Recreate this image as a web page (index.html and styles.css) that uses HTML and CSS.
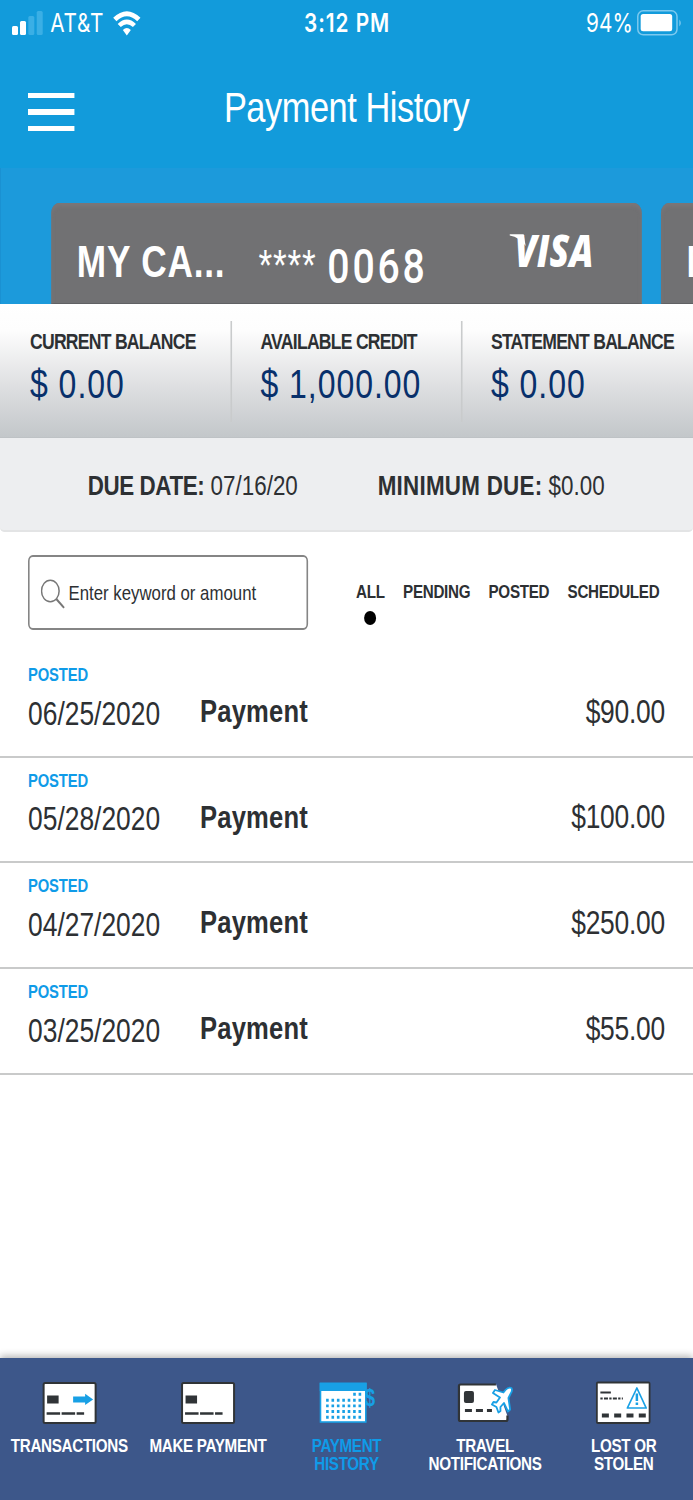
FILE: index.html
```html
<!DOCTYPE html>
<html lang="en">
<head>
<meta charset="utf-8">
<title>Payment History</title>
<link rel="stylesheet" href="styles.css">
</head>
<body>
<div class="app">
  <div class="status">
    <div class="status-left">
      <svg class="signal" width="38.75" height="24" viewBox="0 0 31 24" preserveAspectRatio="none">
        <rect x="0" y="15" width="6" height="9" rx="1.5" fill="#fff"/>
        <rect x="8" y="10" width="6" height="14" rx="1.5" fill="#fff"/>
        <rect x="16.3" y="5" width="6" height="19" rx="1.5" fill="#3aafe5"/>
        <rect x="24.7" y="0" width="6" height="24" rx="1.5" fill="#3aafe5"/>
      </svg>
      <span class="carrier">AT&amp;T</span>
      <svg class="wifi" width="35" height="25" viewBox="0 0 28 25" preserveAspectRatio="none">
        <path d="M2 8.500Q14 -3 26 8.500" fill="none" stroke="#fff" stroke-width="4.8"/>
        <path d="M6.400 14.500Q14 7.200 21.600 14.500" fill="none" stroke="#fff" stroke-width="4.4"/>
        <path d="M10 19Q14 15 18 19L14 24.4Z" fill="#fff"/>
      </svg>
    </div>
    <span class="time">3:12 PM</span>
    <div class="status-right">
      <span class="percent">94%</span>
      <svg width="56.25" height="26" viewBox="0 0 45 26" preserveAspectRatio="none">
        <rect x=".8" y=".8" width="39.2" height="24" rx="5.5" fill="none" stroke="#7cc9ef" stroke-width="1.5"/>
        <rect x="3.7" y="4" width="31.5" height="17.3" rx="2.5" fill="#fff"/>
        <path d="M42.3 9.5Q45.4 13 42.3 16.500Z" fill="#7cc9ef"/>
      </svg>
    </div>
  </div>

  <header class="header">
    <div class="menu"><i></i><i class="mid"></i><i></i></div>
    <h1>Payment History</h1>
  </header>

  <div class="cards">
    <div class="card">
      <span class="card-name">MY CA...</span>
      <span class="card-mask">****</span>
      <span class="card-digits">0068</span>
      <svg class="visa" width="107" height="36" viewBox="0 0 86 36" preserveAspectRatio="none">
        <text x="5" y="33.700" textLength="79" lengthAdjust="spacingAndGlyphs" class="visa-text">VISA</text>
        <path d="M0 1.200H14L16 13Q10 4.500 0 2.600Z" fill="#fff"/>
      </svg>
    </div>
    <div class="card next"><span class="card-name">M</span></div>
  </div>

  <section class="balances">
    <div class="balance"><b>CURRENT BALANCE</b><span>$ 0.00</span></div>
    <div class="balance"><b>AVAILABLE CREDIT</b><span>$ 1,000.00</span></div>
    <div class="balance"><b>STATEMENT BALANCE</b><span>$ 0.00</span></div>
  </section>

  <section class="due">
    <div class="due-date"><b>DUE DATE:</b> 07/16/20</div>
    <div class="due-min"><b>MINIMUM DUE:</b> $0.00</div>
  </section>

  <section class="filters">
    <div class="search">
      <svg width="30" height="30" viewBox="0 0 24 30" preserveAspectRatio="none">
        <ellipse cx="9.500" cy="12" rx="8.800" ry="10.800" fill="none" stroke="#777" stroke-width="1.500"/>
        <path d="M15.500 20L23.300 28.800" stroke="#777" stroke-width="2"/>
      </svg>
      <span>Enter keyword or amount</span>
    </div>
    <div class="tabs">
      <span class="tab active">ALL</span>
      <span class="tab">PENDING</span>
      <span class="tab">POSTED</span>
      <span class="tab">SCHEDULED</span>
    </div>
  </section>

  <main class="list">
    <div class="row"><div class="when"><b>POSTED</b><span>06/25/2020</span></div><strong>Payment</strong><span class="amount">$90.00</span></div>
    <div class="row"><div class="when"><b>POSTED</b><span>05/28/2020</span></div><strong>Payment</strong><span class="amount">$100.00</span></div>
    <div class="row"><div class="when"><b>POSTED</b><span>04/27/2020</span></div><strong>Payment</strong><span class="amount">$250.00</span></div>
    <div class="row"><div class="when"><b>POSTED</b><span>03/25/2020</span></div><strong>Payment</strong><span class="amount">$55.00</span></div>
  </main>

  <nav class="nav">
    <div class="nav-item">
      <svg width="70" height="44" viewBox="0 0 56 44" preserveAspectRatio="none">
        <rect x="2" y="2" width="52" height="40" rx="1.500" fill="#fff" stroke="#303437" stroke-width="2"/>
        <rect x="5.500" y="14.500" width="11.500" height="8" fill="#303437"/>
        <path d="M31.500 15.500H43.500V12.800L51.500 18.500L43.500 24V21.500H31.500Z" fill="#18a0e5"/>
        <path d="M5 32.500H42.500" stroke="#303437" stroke-width="2.400" stroke-dasharray="13.500 1.500"/>
      </svg>
      <span>TRANSACTIONS</span>
    </div>
    <div class="nav-item">
      <svg width="70" height="44" viewBox="0 0 56 44" preserveAspectRatio="none">
        <rect x="2" y="2" width="52" height="40" rx="1.500" fill="#fff" stroke="#303437" stroke-width="2"/>
        <rect x="5.500" y="14.500" width="11.500" height="8" fill="#303437"/>
        <path d="M5 32.500H42.500" stroke="#303437" stroke-width="2.400" stroke-dasharray="13.500 1.500"/>
      </svg>
      <span>MAKE PAYMENT</span>
    </div>
    <div class="nav-item active">
      <svg width="70" height="44" viewBox="0 0 56 44" preserveAspectRatio="none">
        <rect x="2" y="2.500" width="45.300" height="38.500" fill="#fff" stroke="#18a0e5" stroke-width="1.600"/>
        <rect x="1.200" y="1.700" width="47" height="8.300" fill="#18a0e5"/>
        <g stroke="#18a0e5" stroke-width="2.900">
          <path d="M34.700 13.300H44" stroke-dasharray="2.600 2.800"/>
          <path d="M7.600 19.200H44M7.600 24.900H44M7.600 30.500H44M7.600 36.200H44" stroke-dasharray="2.600 2.800"/>
        </g>
        <text x="46.200" y="25.500" textLength="10" lengthAdjust="spacingAndGlyphs" class="dollar">$</text>
      </svg>
      <span>PAYMENT<br>HISTORY</span>
    </div>
    <div class="nav-item">
      <svg width="70" height="44" viewBox="0 0 56 44" preserveAspectRatio="none">
        <path d="M39 3H3.500Q2 3 2 4.500V38.500Q2 40 3.500 40H49Q50.500 40 50.500 38.500V35L39 3" fill="#fff"/>
        <path d="M39 3.500H3.500Q2 3.500 2 5V38.500Q2 40 3.500 40H49Q50.500 40 50.500 38.500V34.500" fill="none" stroke="#303437" stroke-width="2.200"/>
        <rect x="7" y="10" width="10" height="12" rx="2" fill="#303437"/>
        <path d="M8 29.500H15M19 29.500H26M30 29.500H35" stroke="#303437" stroke-width="3"/>
        <path d="M54.500 7Q51.500 5.800 48.500 9L46.500 11.500L38 9L36 12L43 16.500L39.500 21.500L36.500 21L35 23.500L39.500 26L41.500 31.500L43.500 30L43.500 26L47 22L51 30.500L53.200 28.500L51.500 17L53.500 13Q56 9.500 54.500 7Z" fill="#fff" stroke="#18a0e5" stroke-width="1.800" stroke-linejoin="round"/>
      </svg>
      <span>TRAVEL<br>NOTIFICATIONS</span>
    </div>
    <div class="nav-item">
      <svg width="70" height="44" viewBox="0 0 56 44" preserveAspectRatio="none">
        <rect x="1.500" y="1.500" width="52.700" height="40.500" rx="1" fill="#fff" stroke="#303437" stroke-width="1.800"/>
        <path d="M5 11.500H15.500" stroke="#303437" stroke-width="2"/>
        <path d="M5 17.500H27.500" stroke="#303437" stroke-width="2.200" stroke-dasharray="2.300 1.300 4 1.300"/>
        <path d="M6.500 34.500H50.500" stroke="#303437" stroke-width="4.200" stroke-dasharray="7 5.300"/>
        <path d="M41.500 7L50.800 27H32Z" fill="#fff" stroke="#18a0e5" stroke-width="1.700" stroke-linejoin="round"/>
        <path d="M41.500 12.500V20M41.500 21.500V24" stroke="#18a0e5" stroke-width="2.500"/>
      </svg>
      <span>LOST OR<br>STOLEN</span>
    </div>
  </nav>
</div>
</body>
</html>
```
FILE: styles.css
```css
html, body {
  margin: 0;
  width: 693px;
  height: 1500px;
  overflow: hidden;
  background: #fff;
}

* { box-sizing: border-box; }

/* The whole app is drawn with condensed horizontal proportions. */
.app {
  width: 866px;
  height: 1500px;
  transform: scaleX(calc(693 / 866));
  transform-origin: 0 0;
  display: flex;
  flex-direction: column;
  overflow: hidden;
  background: #fff;
  color: #2d3033;
  font-family: "Liberation Sans", Arial, sans-serif;
  white-space: nowrap;
}

.status {
  display: grid;
  grid-template-columns: 1fr auto 1fr;
  align-items: center;
  height: 46px;
  padding: 0 13.500px 0 15px;
  background: #129bdb;
  color: #fff;
  font: 400 26px/46px Inter, sans-serif;
}
.status-left, .status-right { display: flex; align-items: center; }
.status-right { justify-content: flex-end; gap: 5px; }
.signal { margin-right: 9px; }
.carrier { letter-spacing: .9px; margin-right: 11px; }
.time { font-weight: 600; letter-spacing: 1.200px; }
.percent { letter-spacing: .2px; }

.header {
  display: grid;
  grid-template-columns: 57.500px 1fr 57.500px;
  align-items: center;
  height: 122px;
  padding: 0 35px;
  background: #129bdb;
  color: #fff;
}
.menu { display: flex; flex-direction: column; justify-content: space-between; height: 38px; margin-top: 9px; }
.menu i { height: 5px; background: #fff; }
.menu .mid { height: 6px; }
h1 { margin: 0; text-align: center; font-size: 43px; line-height: 50px; font-weight: 400; letter-spacing: -.6px; }

.cards {
  display: flex;
  gap: 24px;
  height: 136px;
  padding: 35px 0 0 63px;
  background: #1c9adb;
  border-left: 1px solid #1b8fd0;
  overflow: hidden;
}
.card {
  display: flex;
  align-items: flex-start;
  flex: none;
  width: 738px;
  height: 101px;
  padding-left: 32px;
  border-radius: 10px 10px 0 0;
  background: #717173;
  box-shadow: inset 0 3px 4px #7b7678, inset 0 -1px 0 #606164;
  color: #fff;
}
.card-name { width: 227px; margin-top: 37px; font-size: 44px; line-height: 44px; font-weight: 700; letter-spacing: 1px; }
.card-mask { width: 86px; margin-top: 41px; font-size: 44px; line-height: 44px; letter-spacing: 1px; }
.card-digits { width: 228px; margin-top: 42px; font: 500 49px/44px Roboto, sans-serif; letter-spacing: 3.500px; }
.visa { margin-top: 30px; overflow: visible; }
.visa-text { font: italic 800 45px "Open Sans", sans-serif; fill: #fff; }

.balances {
  display: flex;
  height: 134px;
  background: linear-gradient(#fff 0, #fdfdfd 20%, #dedfe1 62%, #c3c7ca 100%);
  border-bottom: 1px solid #bec2c5;
}
.balance {
  display: flex;
  flex-direction: column;
  gap: 10px;
  flex: none;
  width: 288px;
  padding: 25.500px 0 0 37.500px;
}
.balance + .balance { background: linear-gradient(#c9cbcc, #c9cbcc) 0 17px / 2px 101px no-repeat; }
.balance b { font-size: 22px; line-height: 24px; letter-spacing: -.95px; }
.balance span { font-size: 40px; line-height: 40px; letter-spacing: 1.200px; color: #08306b; }

.due {
  display: flex;
  height: 94px;
  padding-left: 109.500px;
  background: #edeef0;
  border-bottom: 2px solid #e3e4e5;
  border-radius: 0 0 5px 5px;
  font-size: 28px;
  line-height: 95px;
}
.due-date { width: 362.500px; }
.due-date b { letter-spacing: -.5px; }
.due-min b { letter-spacing: .3px; }

.filters { display: flex; height: 120px; padding: 23px 35px 0; }
.search {
  display: flex;
  align-items: center;
  gap: 4.500px;
  width: 350px;
  height: 75px;
  padding-left: 14px;
  border: 2px solid #858585;
  border-radius: 6px;
  font-size: 21px;
  line-height: 30px;
}
.search svg { margin-top: 2px; }
.tabs { display: flex; gap: 23px; margin-left: 60px; padding-top: 27px; }
.tab { font-size: 19px; line-height: 20px; font-weight: 700; letter-spacing: -.4px; }
.tab.active { display: flex; flex-direction: column; align-items: center; gap: 9px; }
.tab.active::after { content: ""; width: 15px; height: 14px; border-radius: 50%; background: #000; }

.list { flex: 1; }
.row {
  display: flex;
  height: 105.700px;
  padding: 13px 35px 0;
  border-bottom: 2px solid #c9caca;
}
.when { display: flex; flex-direction: column; width: 215px; }
.when b { font-size: 18.500px; line-height: 20px; color: #0f9be8; letter-spacing: -.2px; }
.when span { margin-top: 10.500px; font-size: 33px; line-height: 36px; }
.row strong { margin-top: 28px; font-size: 32px; line-height: 36px; letter-spacing: .2px; }
.amount { margin: 28.500px 0 0 auto; font-size: 33px; line-height: 36px; letter-spacing: -.3px; }

.nav {
  display: grid;
  grid-template-columns: repeat(5, 1fr);
  height: 142px;
  padding-top: 23px;
  background: #3d578a;
  box-shadow: 0 -2px 8px rgba(0, 0, 0, .3);
  color: #fff;
}
.nav-item {
  display: flex;
  flex-direction: column;
  align-items: center;
  gap: 12px;
  font-size: 19px;
  line-height: 18px;
  font-weight: 700;
  letter-spacing: -.4px;
  text-align: center;
}
.nav-item svg { flex: none; overflow: visible; }
.nav-item.active { color: #0f9be8; }
.dollar { font: 700 24px "Liberation Sans", sans-serif; fill: #18a0e5; }
```
